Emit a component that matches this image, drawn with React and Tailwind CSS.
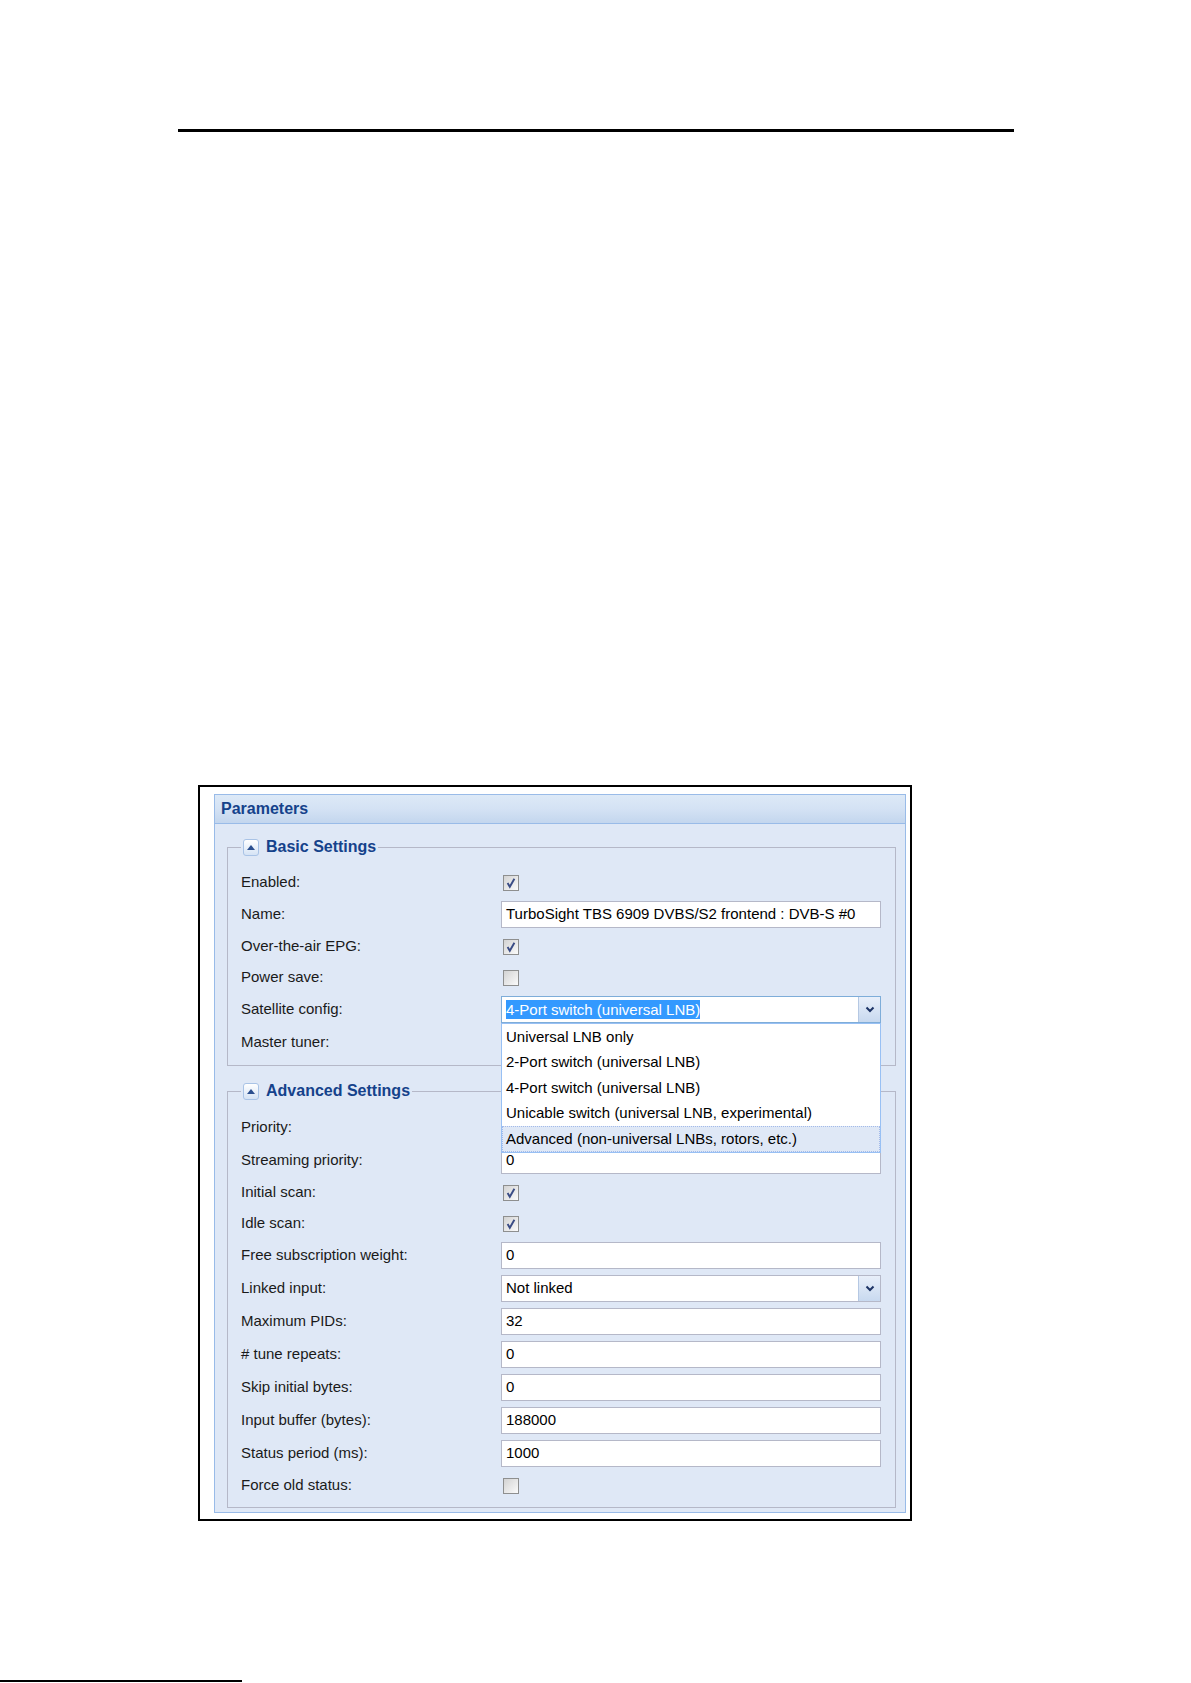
import React from 'react';

const Checkbox = ({ checked }) => (
  <div className="ml-[2px] w-[16px] h-[16px] border border-[#8e8f8f] bg-linear-to-br from-[#d3d3d3] to-[#fbfbfb] flex items-center justify-center">
    {checked && (
      <svg width="12" height="12" viewBox="0 0 12 12">
        <path d="M2.6 6 L4.8 9.8 L9.4 1.8" fill="none" stroke="#3a4c85" strokeWidth="1.9" />
      </svg>
    )}
  </div>
);

const TextField = ({ value }) => (
  <div className="w-full h-[27px] border border-[#b5b8c8] bg-white flex items-center pl-[4px] text-black">
    {value}
  </div>
);

const Trigger = () => (
  <div className="w-[22px] shrink-0 border-l border-[#b5c8e3] bg-linear-to-b from-[#e8effa] to-[#c8d9ef] flex items-center justify-center">
    <svg width="10" height="7" viewBox="0 0 10 7">
      <path d="M1.5 1.5 L5 5 L8.5 1.5" fill="none" stroke="#1d3466" strokeWidth="2" />
    </svg>
  </div>
);

const Combo = ({ value, focused, children }) => (
  <div className="relative w-full">
    <div className={focused ? 'h-[27px] flex border border-[#7eadd9] bg-white' : 'h-[27px] flex border border-[#b5b8c8] bg-white'}>
      <div className="flex-1 flex items-center pl-[4px] text-black">
        {focused ? <span className="bg-[#3399ff] text-white leading-[19px]">{value}</span> : value}
      </div>
      <Trigger />
    </div>
    {children}
  </div>
);

const satOptions = [
  'Universal LNB only',
  '2-Port switch (universal LNB)',
  '4-Port switch (universal LNB)',
  'Unicable switch (universal LNB, experimental)',
  'Advanced (non-universal LNBs, rotors, etc.)',
];

const Dropdown = () => (
  <div className="absolute left-0 right-0 top-full z-10 bg-white border border-[#98c0f4]">
    {satOptions.map((o, i) => (
      <div
        key={o}
        className={
          i === satOptions.length - 1
            ? 'h-[25.5px] flex items-center pl-[3px] bg-[#dfe8f6] border border-dotted border-[#a3bae9] text-black'
            : 'h-[25.5px] flex items-center pl-[3px] border border-transparent text-black'
        }
      >
        {o}
      </div>
    ))}
  </div>
);

const Row = ({ label, tall, children }) => (
  <div className={tall ? 'h-[33px] flex items-center' : 'h-[31px] flex items-center'}>
    <div className="w-[260px] shrink-0 text-[#1a1a1a]">{label}</div>
    <div className="flex-1 flex items-center">{children}</div>
  </div>
);

const Legend = ({ title }) => (
  <legend className="px-[2px] h-[20px]">
    <div className="h-[20px] flex items-center gap-[7px]">
      <div className="w-[16px] h-[17px] rounded-[3px] border border-[#a9c3e6] bg-linear-to-b from-white to-[#d5e3f5] flex items-center justify-center">
        <svg width="8" height="5" viewBox="0 0 8 5">
          <path d="M0 5 L4 0 L8 5 Z" fill="#2b4f8f" />
        </svg>
      </div>
      <span className="text-[16px] font-bold text-[#15428b]">{title}</span>
    </div>
  </legend>
);

export default function App() {
  return (
    <div className="w-[1191px] h-[1683px] bg-white overflow-hidden font-['Liberation_Sans',Arial,sans-serif] text-[15px]">
      <div className="mt-[129px] ml-[178px] w-[836px] h-[3px] bg-black" />

      <div className="mt-[653px] ml-[198px] w-[714px] border-2 border-black bg-white pl-[14px] pt-[7px] pr-[4px] pb-[6px]">
        <div className="border border-[#99bbe8]">
          <div className="h-[29px] border-b border-[#99bbe8] bg-linear-to-b from-[#dde9f7] via-[#d4e2f4] to-[#c3d6ee] flex items-center pl-[6px]">
            <span className="text-[16px] font-bold text-[#15428b]">Parameters</span>
          </div>

          <div className="bg-[#dfe8f6] pt-[13px] pb-[4px]">
            <fieldset className="border border-[#b5b8c8] ml-[12px] mr-[9px] pl-[13px] pr-[14px] pt-[10px] pb-[6px]">
              <Legend title="Basic Settings" />
              <Row label="Enabled:"><Checkbox checked /></Row>
              <Row label="Name:" tall><TextField value="TurboSight TBS 6909 DVBS/S2 frontend : DVB-S #0" /></Row>
              <Row label="Over-the-air EPG:"><Checkbox checked /></Row>
              <Row label="Power save:"><Checkbox /></Row>
              <Row label="Satellite config:" tall>
                <Combo value="4-Port switch (universal LNB)" focused>
                  <Dropdown />
                </Combo>
              </Row>
              <Row label="Master tuner:" tall><Combo value="" /></Row>
            </fieldset>

            <fieldset className="mt-[15px] border border-[#b5b8c8] ml-[12px] mr-[9px] pl-[13px] pr-[14px] pt-[10px] pb-[6px]">
              <Legend title="Advanced Settings" />
              <Row label="Priority:" tall><TextField value="" /></Row>
              <Row label="Streaming priority:" tall><TextField value="0" /></Row>
              <Row label="Initial scan:"><Checkbox checked /></Row>
              <Row label="Idle scan:"><Checkbox checked /></Row>
              <Row label="Free subscription weight:" tall><TextField value="0" /></Row>
              <Row label="Linked input:" tall><Combo value="Not linked" /></Row>
              <Row label="Maximum PIDs:" tall><TextField value="32" /></Row>
              <Row label="# tune repeats:" tall><TextField value="0" /></Row>
              <Row label="Skip initial bytes:" tall><TextField value="0" /></Row>
              <Row label="Input buffer (bytes):" tall><TextField value="188000" /></Row>
              <Row label="Status period (ms):" tall><TextField value="1000" /></Row>
              <Row label="Force old status:"><Checkbox /></Row>
            </fieldset>
          </div>
        </div>
      </div>

      <div className="mt-[159px] w-[242px] h-[2px] bg-black" />
    </div>
  );
}
